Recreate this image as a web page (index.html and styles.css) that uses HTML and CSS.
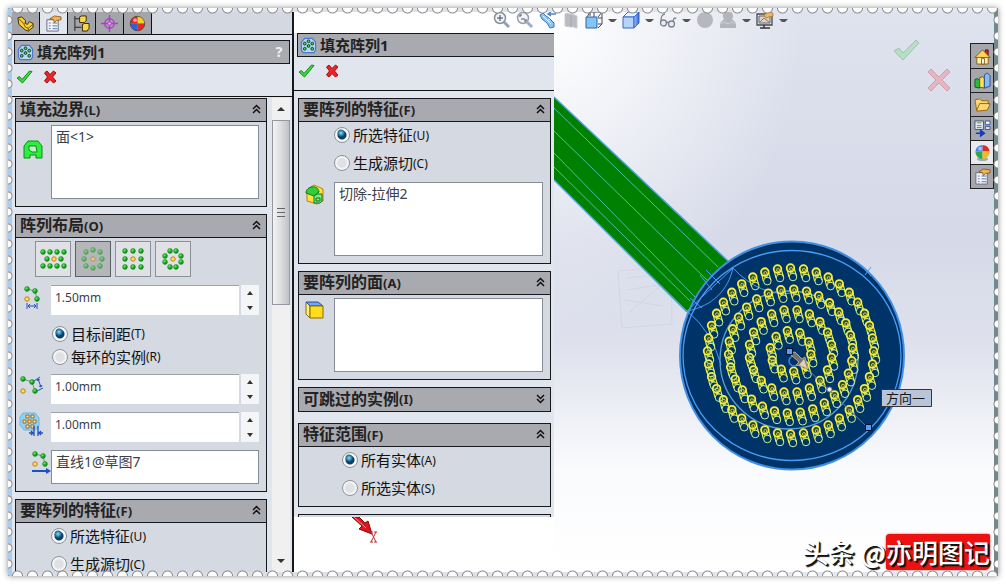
FILE: index.html
```html
<!DOCTYPE html>
<html lang="zh-CN">
  <head>
    <meta charset="UTF-8" />
    <meta name="viewport" content="width=device-width, initial-scale=1.0" />
    <title>填充阵列1</title>
    <link rel="stylesheet" href="styles.css">
  </head>
  <body>
    <!-- shared icons -->
    <svg class="defs" width="0" height="0" aria-hidden="true">
      <defs>
        <radialGradient id="greenBall" cx="35%" cy="30%" r="70%"><stop offset="0" stop-color="#7df27a" /><stop offset="0.5" stop-color="#20b824" /><stop offset="1" stop-color="#087a10" /></radialGradient>
        <linearGradient id="blueFace"><stop offset="0" stop-color="#9cc8ff" /><stop offset="1" stop-color="#2f5fe0" /></linearGradient>
      </defs>
      <symbol id="dot" viewBox="0 0 6 6"><circle cx="3" cy="3" r="2.4" fill="url(#greenBall)" stroke="#138a1c" stroke-width="0.6" /></symbol>
      <symbol id="seed" viewBox="0 0 6 6"><circle cx="3" cy="3" r="2.2" fill="#ffe25a" stroke="#c07a10" stroke-width="1" /></symbol>
      <symbol id="fill" viewBox="0 0 18 18">
        <path d="M5 1.5h8l3.5 4v8.500l-2 2.500h-11l-2-2.500V5.500z" fill="#b8d8f4" stroke="#4a78d0" stroke-width="1.3" />
        <g fill="#3fd06a" stroke="#123c20" stroke-width="1"><circle cx="9" cy="4.500" r="1.500" /><circle cx="5" cy="7" r="1.500" /><circle cx="13" cy="7" r="1.500" /><circle cx="9" cy="9.500" r="1.500" /><circle cx="5" cy="12.500" r="1.500" /><circle cx="13" cy="12.500" r="1.500" /></g>
      </symbol>
      <symbol id="ok" viewBox="0 0 17 14"><path d="M1 8l2.500-1.500L6 9.500 13.500 1l2.500.5L6.500 13z" fill="#3ddc3d" stroke="#128a1e" /></symbol>
      <symbol id="cancel" viewBox="0 0 14 14"><path d="M1.500 3L4 1l3 3.500L10.500 1 13 3 9.500 7l3.500 4-2.500 2L7 9.500 4 13l-2.500-2L4.500 7z" fill="#ee2424" stroke="#9c1010" /></symbol>
      <symbol id="up" viewBox="0 0 9 10"><path d="M1 5l3.500-3.500L8 5M1 9l3.500-3.500L8 9" fill="none" stroke="#111" stroke-width="1.500" /></symbol>
      <symbol id="down" viewBox="0 0 9 10"><path d="M1 1l3.500 3.500L8 1M1 5l3.500 3.500L8 5" fill="none" stroke="#111" stroke-width="1.500" /></symbol>
      <symbol id="sheet" viewBox="0 0 18 18">
        <path d="M2 5h12v12H2z" fill="#f3f4f8" stroke="#666a78" />
        <path d="M4 8.500h2M4 11.500h2M4 14.500h2M8 8.500h5M8 11.500h5M8 14.500h5" stroke="#5074b8" />
        <path d="M5 4l5-3 7 1v3l-5 1-2 2-1-3z" fill="#f0b254" stroke="#7c4c10" stroke-width="0.8" />
      </symbol>
      <symbol id="ball" viewBox="0 0 18 18">
        <path d="M9 9V1a8 8 0 0 1 8 8z" fill="#f2d22c" /><path d="M9 9H1a8 8 0 0 1 8-8z" fill="#e32a22" />
        <path d="M9 9v8a8 8 0 0 1-8-8z" fill="#2f62d8" /><path d="M9 9h8a8 8 0 0 1-8 8z" fill="#e32a22" />
        <circle cx="9" cy="9" r="7.600" fill="none" stroke="#444" stroke-width="0.800" /><circle cx="6.500" cy="5.500" r="2" fill="#fff" opacity="0.55" />
      </symbol>
      <symbol id="scene" viewBox="0 0 18 18">
        <ellipse cx="9" cy="16" rx="6" ry="2" fill="#7a7d84" opacity="0.6" />
        <path d="M9 8V1a7.500 7.500 0 0 1 7.500 7z" fill="#e32a22" /><path d="M9 8H1.500A7.500 7.500 0 0 1 9 1z" fill="#4a86ea" />
        <path d="M9 8v8a7.500 7.500 0 0 1-7.500-8z" fill="#2fa848" /><path d="M9 8h7.500A7.500 7.500 0 0 1 9 16z" fill="#e8bc2c" />
        <circle cx="6.500" cy="5" r="2" fill="#fff" opacity="0.5" />
      </symbol>
    </svg>

    <div class="frame">
      <div class="window">
        <aside class="manager">
          <nav class="tabs">
            <button class="tab" aria-label="特征"><svg viewBox="0 0 18 18"><path d="M1 3l4-1 4 4v3l2 1 2-3 4 2v4l-5 4-3-1-7-6z" fill="#f7cf2e" stroke="#3f2d00" /><path d="M2 4l5 5 2 4 3 1v3M7 9l2-1M12 14l5-4" fill="none" stroke="#6e5200" /></svg></button>
            <button class="tab active" aria-label="属性"><svg><use href="#sheet" /></svg></button>
            <button class="tab" aria-label="配置"><svg viewBox="0 0 18 18"><path d="M2 1v16M2 4h5M2 13h7" fill="none" stroke="#222" /><path d="M7 2l2-1h5v5l-2 2H7zM10 10l2-1h5v5l-2 3h-5z" fill="#f7d84a" stroke="#332800" /></svg></button>
            <button class="tab" aria-label="尺寸"><svg viewBox="0 0 18 18"><circle cx="9" cy="9" r="5" fill="none" stroke="#b03cc8" stroke-width="1.500" /><path d="M9 0v18M0 9h18" stroke="#b03cc8" stroke-width="1.500" /><circle cx="9" cy="9" r="2" fill="#d9a8e4" stroke="#b03cc8" /></svg></button>
            <button class="tab" aria-label="外观"><svg><use href="#ball" /></svg></button>
          </nav>

          <header class="title"><svg class="icon"><use href="#fill" /></svg><h1>填充阵列1</h1><button class="help" aria-label="帮助">?</button></header>
          <div class="confirm">
            <button aria-label="确定"><svg width="17" height="14"><use href="#ok" /></svg></button>
            <button aria-label="取消"><svg width="14" height="14"><use href="#cancel" /></svg></button>
          </div>

          <div class="scroll-area">
            <div class="groups">
              <section class="group">
                <h2>填充边界<span>(L)</span><svg><use href="#up" /></svg></h2>
                <div class="body">
                  <div class="row">
                    <svg class="row-icon mid" viewBox="0 0 20 20"><path d="M5 1h10l4 5v12h-6v-3H7v3H1V6z" fill="#2df03a" stroke="#0c8a1c" /><path d="M6 6h7l1 6H9l-3-2z" fill="#c7efcc" stroke="#0c8a1c" /></svg>
                    <textarea class="list" aria-label="填充边界" readonly>面&lt;1&gt;</textarea>
                  </div>
                </div>
              </section>

              <section class="group">
                <h2>阵列布局<span>(O)</span><svg><use href="#up" /></svg></h2>
                <div class="body">
                  <div class="layouts">
                    <button aria-label="穿孔"><svg viewBox="0 0 28 24" data-dots="4,5 11,5 18,5 25,5 8,12 22,12 4,19 11,19 18,19 25,19" data-seed="15,12"></svg></button>
                    <button class="pressed" aria-label="圆周"><svg viewBox="0 0 28 24" data-dots="14,3 21,5 23,12 21,19 14,21 7,19 5,12 7,5" data-seed="14,12"></svg></button>
                    <button aria-label="方形"><svg viewBox="0 0 28 24" data-dots="6,4 14,4 22,4 6,12 22,12 6,20 14,20 22,20" data-seed="14,12"></svg></button>
                    <button aria-label="多边形"><svg viewBox="0 0 28 24" data-dots="11,4 17,4 22,9 22,15 17,20 11,20 6,15 6,9" data-seed="14,12"></svg></button>
                  </div>

                  <div class="row">
                    <svg class="row-icon" viewBox="0 0 24 24" data-dots="8,4 16,6 18,14" data-seed="8,14"><path d="M8 4l8 2 2 8" fill="none" stroke="#6a9a70" /><path d="M8 18v6M18 18v6M9 21h8M11 19l-2 2 2 2M15 19l2 2-2 2" fill="none" stroke="#2050c0" /></svg>
                    <input class="field" type="text" aria-label="环间距" value="1.50mm">
                    <div class="spin"><button aria-label="增加"></button><button aria-label="减少"></button></div>
                  </div>
                  <div class="choices">
                    <label class="radio"><input type="radio" name="spacing" checked>目标间距<span>(T)</span></label>
                    <label class="radio"><input type="radio" name="spacing">每环的实例<span>(R)</span></label>
                  </div>
                  <div class="row">
                    <svg class="row-icon" viewBox="0 0 24 24" data-dots="4,5 13,8 16,17" data-seed="4,17"><path d="M4 5l9 3 3 9" fill="none" stroke="#6a9a70" /><path d="M15 7l6-4M18 17l6-3M19 5l3 8M18 7l1-2 2 1M20 12l2 1 1-2" fill="none" stroke="#2050c0" /></svg>
                    <input class="field" type="text" aria-label="实例间距" value="1.00mm">
                    <div class="spin"><button aria-label="增加"></button><button aria-label="减少"></button></div>
                  </div>
                  <div class="row">
                    <svg class="row-icon" viewBox="0 0 24 24"><path d="M4 1h12l4 5v8l-4 4H5l-4-5V5z" fill="#8cd2f4" stroke="#62b8ec" /><path d="M7 3h3v3H7zM12 3h3v3h-3zM4 8h3v3H4zM9 8h3v3H9zM14 8h3v3h-3zM7 13h3v3H7zM12 13h3v3h-3z" fill="#fff0a0" stroke="#a86414" /><path d="M15 14v10M19 14v10M10 21h4M12 19l2 2-2 2M24 21h-4M22 19l-2 2 2 2" fill="none" stroke="#2050c0" stroke-width="1.300" /></svg>
                    <input class="field" type="text" aria-label="边距" value="1.00mm">
                    <div class="spin"><button aria-label="增加"></button><button aria-label="减少"></button></div>
                  </div>
                  <div class="row">
                    <svg class="row-icon end" viewBox="0 0 24 24" data-dots="8,4 16,6 18,14" data-seed="8,14"><path d="M8 4l8 2 2 8" fill="none" stroke="#6a9a70" /><path d="M5 21h15" stroke="#2050c0" stroke-width="2" /><path d="M19 18l5 3-5 3z" fill="#2050c0" /></svg>
                    <textarea class="list short" aria-label="阵列方向" readonly>直线1@草图7</textarea>
                  </div>
                </div>
              </section>

              <section class="group">
                <h2>要阵列的特征<span>(F)</span><svg><use href="#up" /></svg></h2>
                <div class="body flush">
                  <div class="choices loose">
                    <label class="radio"><input type="radio" name="feature-left" checked>所选特征<span>(U)</span></label>
                    <label class="radio"><input type="radio" name="feature-left">生成源切<span>(C)</span></label>
                  </div>
                </div>
              </section>
            </div>
            <div class="scrollbar"><button aria-label="向上"></button><div class="thumb"></div><button class="to-end" aria-label="向下"></button></div>
          </div>
        </aside>

        <main class="view">
          <div class="toolbar">
            <button aria-label="整屏显示"><svg viewBox="0 0 18 18"><circle cx="7" cy="7" r="5.500" fill="#eef4fa" stroke="#8a909c" stroke-width="1.500" /><path d="M11 11l5 5" stroke="#8f9fc0" stroke-width="3" /><path d="M7 4v6M4 7h6" stroke="#445" /></svg></button>
            <button aria-label="局部放大"><svg viewBox="0 0 18 18"><circle cx="7" cy="7" r="5.500" fill="#eef4fa" stroke="#9a9eac" stroke-width="1.500" /><path d="M11 11l5 5" stroke="#9fabc8" stroke-width="3" /><path d="M4 6V4h2M10 8v2H8M5 8h4" fill="none" stroke="#556" /></svg></button>
            <button aria-label="上一视图"><svg viewBox="0 0 18 18"><path d="M1 4l3-2 3 3 3 2 5 5v4l-4 1-3-5-5-4z" fill="#8fc4ee" stroke="#3a74b8" /><path d="M4 5l8 8M8 10l3-2" stroke="#eaf4ff" /><path d="M10 3h7M12 1l-3 2 3 2" fill="none" stroke="#4a84cc" stroke-width="1.500" /></svg></button>
            <button aria-label="剖面视图"><svg viewBox="0 0 18 18"><path d="M3 3c3-2 4 1 7 0l5 2v12c-3 0-3-2-6-1l-6-1z" fill="#b9bbc2" stroke="#c9cbd2" /><path d="M9 4v12" stroke="#a5a7ae" /></svg></button>
            <button aria-label="视图定向"><svg viewBox="0 0 18 18"><path d="M5 5V1h12v12h-4M5 1l-3 5M17 1l-4 5M17 13l-4 4M9 1v5M17 7h-4" fill="none" stroke="#444c5c" /><path d="M1 6h11v11H1z" fill="#86c4f4" stroke="#2b64a8" /></svg></button>
            <i class="caret"></i>
            <button aria-label="显示样式"><svg viewBox="0 0 18 18"><path d="M1 6l5-5h11l-5 5z" fill="#eaf3ff" stroke="#3c66c0" /><path d="M1 6h11v11H1z" fill="#b4d4fb" stroke="#3c66c0" /><path d="M12 6l5-5v11l-5 5z" fill="url(#blueFace)" stroke="#3c66c0" /></svg></button>
            <i class="caret"></i>
            <button aria-label="隐藏项目"><svg viewBox="0 0 18 18"><g fill="#e8edf2" stroke="#7b8290" stroke-width="1.300"><circle cx="4.500" cy="12" r="3" /><circle cx="12.500" cy="13" r="3" /><path d="M7 12c1-1 2-1 3 0M2 10c0-5 2-7 4-7M14 10c1-3 2-4 3-2" fill="none" /></g></svg></button>
            <i class="caret"></i>
            <button aria-label="编辑外观"><svg viewBox="0 0 18 18"><circle cx="9" cy="9" r="8" fill="#b6b8be" /></svg></button>
            <button aria-label="应用布景"><svg viewBox="0 0 18 18"><path d="M5 8a5 5 0 1 1 8 0l4 4v5H1v-5z" fill="#b3b5bb" /><path d="M1 13l4-2 4 2 4-2 4 2" fill="none" stroke="#cfd1d7" /></svg></button>
            <i class="caret"></i>
            <button aria-label="视图设定"><svg viewBox="0 0 18 18"><path d="M1 3h15v11H1z" fill="#e4e5e8" stroke="#44484f" stroke-width="1.300" /><path d="M3 5h11v7H3z" fill="#d9d2cc" stroke="#666" /><path d="M4 11l4-4 5 4" fill="none" stroke="#a8705c" /><path d="M4 17h10M8 14v3" stroke="#333" stroke-width="1.500" /><path d="M8 4l4-3 5 1v3l-4 1-3 1z" fill="#f6b75c" stroke="#a56b22" stroke-width="0.700" /></svg></button>
            <i class="caret"></i>
          </div>

          <div class="work">
            <div class="side">
              <div class="panel">
                <header class="title open"><svg class="icon"><use href="#fill" /></svg><h1>填充阵列1</h1></header>
                <div class="confirm">
                  <button aria-label="确定"><svg width="17" height="14"><use href="#ok" /></svg></button>
                  <button aria-label="取消"><svg width="14" height="14"><use href="#cancel" /></svg></button>
                </div>
                <div class="groups">
                  <section class="group">
                    <h2>要阵列的特征<span>(F)</span><svg><use href="#up" /></svg></h2>
                    <div class="body flush">
                      <div class="choices loose">
                        <label class="radio"><input type="radio" name="feature" checked>所选特征<span>(U)</span></label>
                        <label class="radio"><input type="radio" name="feature">生成源切<span>(C)</span></label>
                      </div>
                      <div class="row">
                        <svg class="row-icon" viewBox="0 0 24 24"><path d="M5 8l7-5 9 4v12l-6 3-10-3z" fill="#ffe23c" stroke="#c27a10" /><path d="M4 11c0-7 12-9 13-1l-5 4z" fill="#2ecf3a" stroke="#0c7a18" /><path d="M12 14l3-2h5v7l-2 2h-6z" fill="#7fe884" stroke="#0c7a18" /><path d="M14 16h4v3h-4z" fill="none" stroke="#0c7a18" /></svg>
                        <textarea class="list" aria-label="要阵列的特征" readonly>切除-拉伸2</textarea>
                      </div>
                    </div>
                  </section>
                  <section class="group">
                    <h2>要阵列的面<span>(A)</span><svg><use href="#up" /></svg></h2>
                    <div class="body">
                      <div class="row">
                        <svg class="row-icon" viewBox="0 0 24 24"><path d="M4 4l4 4v12l-4-4z" fill="#fff27a" stroke="#8a6a00" /><path d="M4 4h12l5 4H8z" fill="#6ca6f4" stroke="#2a4f9c" /><path d="M8 8h13v12H8z" fill="#ffdc1e" stroke="#8a6a00" /></svg>
                        <textarea class="list" aria-label="要阵列的面" readonly></textarea>
                      </div>
                    </div>
                  </section>
                  <section class="group collapsed">
                    <h2>可跳过的实例<span>(I)</span><svg><use href="#down" /></svg></h2>
                  </section>
                  <section class="group">
                    <h2>特征范围<span>(F)</span><svg><use href="#up" /></svg></h2>
                    <div class="body scope">
                      <div class="choices loose indent">
                        <label class="radio"><input type="radio" name="scope" checked>所有实体<span>(A)</span></label>
                        <label class="radio"><input type="radio" name="scope">所选实体<span>(S)</span></label>
                      </div>
                    </div>
                  </section>
                  <div class="group cut"></div>
                </div>
              </div>
              <svg class="axis" viewBox="0 0 30 28" aria-hidden="true"><path d="M0 0h7l6 6 3-2 4 13-13-5 3-3z" fill="#e0141c" stroke="#7c0a0e" /><path d="M2 0l12 11" stroke="#ff8a8a" /><path d="M19 15l5 10M24 15l-5 10M18 15h3M22 15h3M18 25h3M22 25h3" fill="none" stroke="#c4282c" /></svg>
            </div>

            <svg class="canvas" viewBox="554 33 440 539" preserveAspectRatio="xMinYMin slice" role="img" aria-label="模型">
              <g fill="none" stroke="#ccd1df" opacity="0.6"><path d="M618 271l53-5 1 58-50 4zM626 278l34-3M627 290l36-6M625 300l38 6M630 312l30-26" /></g>
              <path d="M554 97L728 261 735 275 694 319 687 311 554 180z" fill="#008000" />
              <g fill="none" stroke="#42bfa8"><path d="M554 108l164 159M554 131l154 150M554 153l141 144M554 167l136 134" /></g>
              <path d="M554 97l174 164M554 180l133 132" fill="none" stroke="#4ea4dc" stroke-width="1.500" />
              <ellipse cx="792" cy="355.500" rx="112" ry="114" fill="#003468" stroke="#3f8fe4" stroke-width="2" />
              <g fill="none" stroke="#4a9cf4" stroke-width="1.300">
                <ellipse cx="792" cy="355.500" rx="109" ry="105" />
                <ellipse cx="789" cy="360" rx="69" ry="69" stroke="#5aa0d0" />
                <path d="M687 311l46-43M733 268c-5 22-20 38-46 43M687 311q25 20 34 54M733 268q27 29 60 25M700 275l12 15M706 270l14 14M690 298l12 10M863 267l8 9M871 267l-6 8" stroke-width="1" />
              </g>
              <g id="holes"></g>
              <path d="M790 352l78 76" stroke="#6080a8" />
              <circle cx="794" cy="361" r="5" fill="none" stroke="#3b86ee" stroke-width="1.500" />
              <path d="M791 353l4-1 7 7 3-2 3 11-12-3 3-3-8-7z" fill="#756f6a" stroke="#b5a99c" />
              <path d="M804 359l3 9-8-3z" fill="#ddd2b8" />
              <path d="M786.500 348.500h6v6h-6zM865.500 424.500h6v6h-6z" fill="#5c9cf4" stroke="#06142c" />
              <circle cx="829.500" cy="389.500" r="2.500" fill="#eee" stroke="#777" />
              <path d="M881.500 389.500h50v17h-50z" fill="#b9c4d6" stroke="#33363c" />
              <text class="callout" x="886" y="403">方向一</text>
              <g opacity="0.4"><path d="M894 51l5-3 4 5 13-13 3 3-16 17z" fill="#7bdc86" stroke="#3c9c50" /><path d="M928 72l3-3 8 8 8-8 3 3-8 8 8 8-3 3-8-8-8 8-3-3 8-8z" fill="#f47a86" stroke="#b8404c" /></g>
            </svg>
          </div>

          <nav class="taskpane">
            <button aria-label="资源"><svg viewBox="0 0 18 18"><path d="M12 2h3v6h-3z" fill="#c03020" stroke="#611" /><path d="M3 9h12v8H3z" fill="#fff2a8" stroke="#8a5a10" /><path d="M1 10l8-8 8 8z" fill="#ffd65a" stroke="#8a5a10" /><path d="M8 11h3v6H8z" fill="#fff" stroke="#8a5a10" /></svg></button>
            <button aria-label="设计库"><svg viewBox="0 0 18 18"><path d="M1 8l3-1 2 2v8l-5-1z" fill="#2fb83c" stroke="#0b5c18" /><path d="M6 6l3-1 2 2v10l-5-1z" fill="#ffe05a" stroke="#7c5400" /><path d="M11 3l3-2 3 3v11l-6 2z" fill="#86baf2" stroke="#274e94" /></svg></button>
            <button aria-label="文件"><svg viewBox="0 0 18 18"><path d="M1 4l5-1 2 2h7v3l2 1-3 6-11 1z" fill="#ffd772" stroke="#94640e" /><path d="M3 15l3-7h11" fill="none" stroke="#94640e" /></svg></button>
            <button aria-label="视图调色板"><svg viewBox="0 0 18 18"><path d="M1 1h9v9H1zM12 1h5v4h-5zM12 7h5v3h-5z" fill="#e4edf8" stroke="#32558c" /><path d="M3 3h5M3 6h5M3 8h5" stroke="#8a7a20" /><path d="M2 14h7M7 11l4 3-4 3z" fill="#1838c4" stroke="#1838c4" stroke-width="1.500" /></svg></button>
            <button class="active" aria-label="外观"><svg><use href="#scene" /></svg></button>
            <button aria-label="自定义属性"><svg><use href="#sheet" /></svg></button>
          </nav>
          <p class="credit">头条 @<b>亦明图记</b></p>
        </main>
      </div>
      <div class="edge top"></div>
      <div class="edge bottom"></div>
      <div class="edge left"></div>
      <div class="edge right"></div>
    </div>
    <script src="app.js"></script>
  </body>
</html>
```

FILE: styles.css
```css
* {
  box-sizing: border-box;
  padding: 0;
  margin: 0;
}

body {
  font-family: "Noto Sans", "Noto Sans CJK SC", sans-serif;
  font-size: 14px;
  background-color: white;
  color: #111;
  padding: 8px;
}

button {
  border: none;
  background: none;
  font: inherit;
}

svg {
  display: block;
}

.defs {
  position: absolute;
}

.frame {
  position: relative;
  height: calc(100vh - 16px);
  padding: 4px;
  background: linear-gradient(to right, #a9cdec 4px, #d8dce4 4px, #e6e9f1 calc(100% - 4px), #6f8a8c calc(100% - 4px));
  box-shadow: 0 0 6px rgba(0, 0, 0, 0.45);
}

.window {
  display: flex;
  height: 100%;
  overflow: hidden;
  background-color: #e1e5ee;
}

/* perforated border */
.edge {
  position: absolute;
}

.edge.top,
.edge.bottom {
  left: 0;
  right: 0;
  height: 6px;
  background: radial-gradient(circle at 50% 0, white 4px, #8a8a8a 5px, transparent 6px) 2px 0 / 15px 6px repeat-x;
}

.edge.top {
  top: 0;
}

.edge.bottom {
  bottom: 0;
  transform: scaleY(-1);
}

.edge.left,
.edge.right {
  top: 0;
  bottom: 0;
  width: 5px;
  background: radial-gradient(circle at 0 50%, white 3px, #8a8a8a 4px, transparent 5px) 0 4px / 5px 16px repeat-y;
}

.edge.left {
  left: 0;
}

.edge.right {
  right: 0;
  transform: scaleX(-1);
}

/* left property manager */
.manager {
  display: flex;
  flex-direction: column;
  flex: 0 0 282px;
  border-right: 2px solid #16181c;
}

.tabs {
  display: flex;
  flex: 0 0 22px;
  background-color: #d3d8e1;
  border-bottom: 1px solid #111;
}

.tab {
  display: flex;
  align-items: center;
  justify-content: center;
  width: 28px;
  background-color: #a4a5aa;
  border-right: 1px solid #111;
}

.tab.active {
  height: 22px;
  background-color: #e1e5ee;
}

.tab svg {
  width: 17px;
  height: 17px;
}

.title {
  display: flex;
  align-items: center;
  flex: 0 0 24px;
  gap: 3px;
  height: 24px;
  margin: 5px 2px 0;
  padding: 0 3px 0 2px;
  background-color: #a9aab0;
  border: 1px solid #16181c;
}

.title.open {
  margin: 0 0 0 3px;
  border-right: none;
}

.title .icon {
  width: 17px;
  height: 17px;
}

.title h1 {
  flex: 1;
  color: #222;
  font-size: 15px;
  line-height: 20px;
}

.help {
  width: 14px;
  color: #f0f0f0;
  font-size: 14px;
  font-weight: bold;
  line-height: 18px;
}

.confirm {
  display: flex;
  align-items: center;
  flex: 0 0 33px;
  gap: 10px;
  height: 33px;
  padding: 0 4px 6px;
  border-bottom: 1px solid #111;
}

.panel .confirm {
  height: 34px;
  margin-bottom: 7px;
}

.scroll-area {
  display: flex;
  flex: 1;
  min-height: 0;
  padding: 1px 2px 0 3px;
}

.groups {
  display: flex;
  flex-direction: column;
  flex: 1;
  gap: 7px;
}

.scroll-area .groups {
  overflow: hidden;
}

.group {
  flex: none;
  border: 1px solid #16181c;
  background-color: #d5d9e1;
}

.group h2 {
  display: flex;
  align-items: center;
  height: 23px;
  padding: 0 5px 2px 4px;
  background-color: #a9aab0;
  border-bottom: 1px solid #16181c;
  color: #222;
  font-size: 16px;
  line-height: 20px;
}

.group h2 span {
  flex: 1;
  padding-top: 1px;
  font-size: 13px;
}

.group h2 svg {
  width: 9px;
  height: 10px;
}

.group.collapsed {
  margin-bottom: 4px;
}

.group.collapsed h2 {
  border-bottom: none;
}

.group.cut {
  height: 3px;
  border-bottom: none;
}

.body {
  padding: 3px 7px 7px 0;
}

.body.flush {
  padding-top: 0;
}

.body.scope {
  padding: 0 7px 3px 0;
}

.body .row + .row {
  margin-top: 8px;
}

.row {
  display: flex;
}

.row-icon {
  flex: none;
  width: 24px;
  height: 24px;
  margin: 0 8px 0 3px;
}

.row-icon.mid {
  width: 20px;
  height: 20px;
  margin: 15px 8px 0 7px;
}

.row-icon.end {
  margin: 0 0 0 11px;
}

.list {
  flex: 1;
  min-width: 0;
  height: 74px;
  padding: 1px 4px;
  background-color: white;
  border: 1px solid #868d98;
  color: #3c4048;
  font: 14px/20px "Noto Sans", "Noto Sans CJK SC", sans-serif;
  overflow: hidden;
  resize: none;
}

.list.short {
  height: 34px;
}

.field {
  flex: 1;
  min-width: 0;
  height: 30px;
  padding: 0 4px 6px;
  background-color: white;
  border: none;
  border-top: 1px solid #9da3ad;
  color: #3c4048;
  font: 12px "Noto Sans", sans-serif;
}

.spin {
  display: flex;
  flex-direction: column;
  flex: 0 0 18px;
  margin-left: 2px;
  background-color: #f4f5f7;
}

.spin button {
  flex: 1;
}

.spin button::before,
.scrollbar button::before {
  content: "";
  display: block;
  width: 0;
  margin: 0 auto;
  border: 3px solid transparent;
  border-top-width: 0;
  border-bottom: 4px solid #333;
}

.spin button:last-child::before,
.scrollbar .to-end::before {
  transform: rotate(180deg);
}

.layouts {
  display: flex;
  gap: 4px;
  margin: 0 0 8px 19px;
}

.layouts button {
  display: flex;
  align-items: center;
  justify-content: center;
  width: 36px;
  height: 36px;
  background-color: #dfe1e5;
  border: 1px solid #8c9098;
}

.layouts .pressed {
  background-color: #b4b6ba;
  border-color: #5c6068;
}

.layouts .pressed svg {
  opacity: 0.55;
}

.layouts svg {
  width: 28px;
  height: 24px;
}

.choices {
  padding: 7px 0 6px 36px;
}

.choices.loose {
  padding: 0 0 4px 35px;
}

.choices.indent {
  padding: 0 0 0 43px;
}

.radio {
  display: flex;
  align-items: center;
  height: 23px;
  font-size: 15px;
  line-height: 20px;
}

.loose .radio {
  height: 28px;
  padding-bottom: 2px;
}

.radio span {
  padding-top: 1px;
  font-size: 12px;
}

.radio input {
  appearance: none;
  width: 16px;
  height: 16px;
  margin-right: 3px;
  border: 1px solid #8d929a;
  border-radius: 50%;
  background: radial-gradient(circle, #dfe1e4 0 4px, #f6f7f8 6px);
}

.radio input:checked {
  background: radial-gradient(circle at 6px 5px, #8fe0f4 0, #1c6c98 3px, transparent 4px), radial-gradient(circle, #0d3f66 0 4px, #f6f7f8 5px);
}

.scrollbar {
  display: flex;
  flex-direction: column;
  flex: 0 0 18px;
  margin-left: 5px;
  background-color: #f0f0f1;
}

.scrollbar button {
  height: 22px;
}

.scrollbar button::before {
  border-left-width: 4px;
  border-right-width: 4px;
}

.scrollbar .to-end {
  margin-top: auto;
}

.thumb {
  flex: 0 0 39%;
  background:
    repeating-linear-gradient(#666 0 1px, transparent 1px 4px) center / 8px 9px no-repeat,
    linear-gradient(to right, #f4f4f5, #dcdde0 50%, #c0c1c6);
  border: 1px solid #94979d;
}

/* graphics area */
.view {
  position: relative;
  display: flex;
  flex-direction: column;
  flex: 1;
  min-width: 0;
  background:
    linear-gradient(white, white) 0 0 / 260px 100% no-repeat,
    radial-gradient(ellipse at 260px 0, white 0, rgba(255, 255, 255, 0) 40%),
    linear-gradient(#dfe3ee 0, #d5d9e8 40%, #dfe2ed 60%, #fafbfd 82%, white 100%);
}

.toolbar {
  display: flex;
  align-items: center;
  flex: none;
  gap: 5px;
  height: 21px;
  padding: 0 0 6px 199px;
}

.toolbar svg {
  width: 18px;
  height: 18px;
}

.caret {
  flex: 0 0 9px;
  margin-top: 2px;
  border: 3px solid transparent;
  border-top-color: #555;
  border-bottom: none;
}

.work {
  display: flex;
  flex: 1;
  min-height: 0;
}

.side {
  flex: 0 0 260px;
}

.panel {
  background-color: #e1e5ee;
}

.panel .groups {
  padding: 0 3px 0 4px;
}

.axis {
  width: 30px;
  height: 28px;
  margin-left: 58px;
}

.canvas {
  flex: 1;
  min-width: 0;
  height: 100%;
}

.callout {
  font: 13px "Noto Sans CJK SC", sans-serif;
  fill: #14171c;
}

.taskpane {
  position: absolute;
  top: 31px;
  right: 0;
  width: 24px;
  border: 1px solid #222;
}

.taskpane button {
  display: flex;
  align-items: center;
  justify-content: center;
  width: 100%;
  height: 24px;
  background-color: #a6a7ac;
}

.taskpane button + button {
  border-top: 1px solid #222;
}

.taskpane .active {
  background-color: #e8eaf0;
}

.taskpane svg {
  width: 17px;
  height: 17px;
}

.credit {
  position: absolute;
  right: 4px;
  bottom: 2px;
  color: white;
  font: 500 26px/36px "Noto Sans CJK SC", sans-serif;
  text-shadow: 1px 1px 0 #111, 2px 2px 1px #111;
}

.credit b {
  display: inline-block;
  background-color: #ee1111;
  border-radius: 4px 2px 5px 3px;
  box-shadow: 0 0 2px #ee1111;
  font-weight: 500;
}
```

FILE: app.js
```js
const SVG = 'http://www.w3.org/2000/svg';

function add(parent, tag, attrs) {
  const el = document.createElementNS(SVG, tag);
  Object.keys(attrs).forEach(key => el.setAttribute(key, attrs[key]));
  parent.appendChild(el);
}

// small green balls and the yellow seed on the pattern icons
document.querySelectorAll('[data-dots]').forEach(icon => {
  const place = (list, id) => list.split(' ').forEach(point => {
    const [x, y] = point.split(',').map(Number);
    add(icon, 'use', { href: id, x: x - 3, y: y - 3, width: 6, height: 6 });
  });
  place(icon.dataset.dots, '#dot');
  place(icon.dataset.seed, '#seed');
});

// circular fill pattern: 10 more holes on every ring
const holes = document.getElementById('holes');
const rings = [20.5, 41.5, 62, 83];

rings.forEach((radius, i) => {
  const count = (i + 1) * 10;
  for (let n = 0; n < count; n++) {
    const angle = Math.PI / 4 + (n * 2 * Math.PI) / count;
    const x = 790.5 + radius * Math.cos(angle);
    const y = 351 + radius * Math.sin(angle);
    add(holes, 'circle', { cx: x + 2.5, cy: y + 9, r: 3.8, fill: 'none', stroke: '#c4f49c', 'stroke-width': 1 });
    add(holes, 'path', { d: `M${x - 3.5} ${y + 1}l2 8M${x + 3.5} ${y}l2.5 8`, stroke: '#e4f03c', 'stroke-width': 1.2 });
    add(holes, 'circle', { cx: x, cy: y, r: 3.8, fill: '#2c4a3c', stroke: '#f6f03c', 'stroke-width': 1.8 });
    add(holes, 'circle', { cx: x + 0.5, cy: y + 1, r: 1.5, fill: 'none', stroke: '#f6f03c', 'stroke-width': 0.8 });
    add(holes, 'path', { d: `M${x - 1} ${y + 5}h4`, stroke: '#f6f03c', 'stroke-width': 1 });
  }
});
```
